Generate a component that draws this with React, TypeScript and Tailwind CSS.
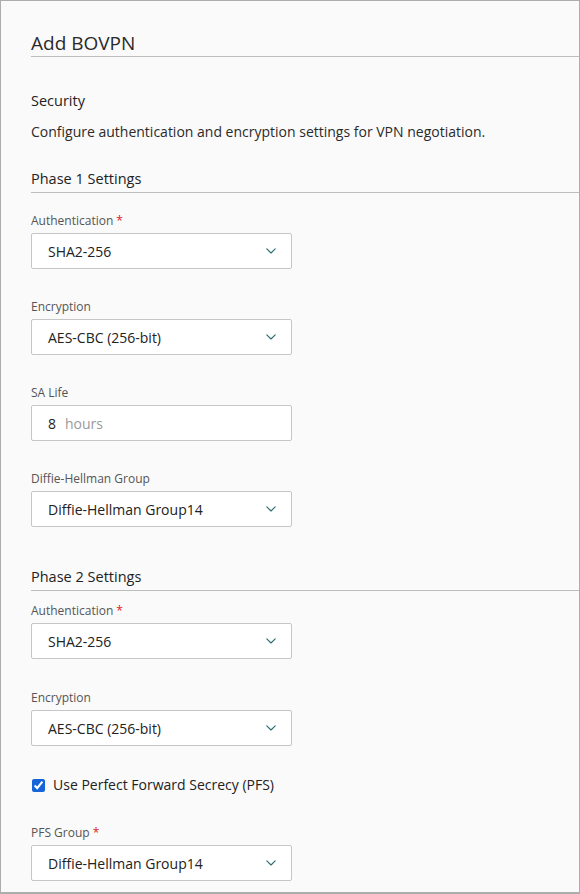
function Chevron() {
  return (
    <svg width="10" height="6" viewBox="0 0 10 6" fill="none" className="shrink-0 mr-[1px]">
      <path d="M0.8 0.8L5 5L9.2 0.8" stroke="#2a6f6f" strokeWidth="1.15" strokeLinecap="round" strokeLinejoin="round" />
    </svg>
  );
}

function Label({ text, required }: { text: string; required?: boolean }) {
  return (
    <div className="text-[12px] leading-[17px] text-[#555]">
      {text}
      {required && <span className="text-[#e0201b] ml-[3px]">*</span>}
    </div>
  );
}

function SelectBox({ value }: { value: string }) {
  return (
    <div className="mt-[4px] w-[261px] h-[36px] bg-white border border-[#c6c6c6] rounded-[2px] flex items-center justify-between pl-[16px] pr-[14px]">
      <span className="text-[14px] text-[#222]">{value}</span>
      <Chevron />
    </div>
  );
}

function Field({
  label,
  value,
  required,
  className = "",
}: {
  label: string;
  value: string;
  required?: boolean;
  className?: string;
}) {
  return (
    <div className={className}>
      <Label text={label} required={required} />
      <SelectBox value={value} />
    </div>
  );
}

function SectionHeading({ text, className = "" }: { text: string; className?: string }) {
  return (
    <div
      className={
        "text-[14.5px] leading-[20px] font-medium text-[#222] pb-[3px] border-b border-[#bdbdbd] " +
        className
      }
    >
      {text}
    </div>
  );
}

export default function App() {
  return (
    <div
      className="w-[580px] h-[894px] bg-[#fafafa] border border-[#adadad] border-b-[2px] pl-[30px] overflow-hidden"
      style={{ fontFamily: '"Open Sans", "Noto Sans", sans-serif' }}
    >
      {/* header */}
      <h1 className="mt-[29px] text-[19px] leading-[26px] text-[#2a2a2a] border-b border-[#bdbdbd]">
        Add BOVPN
      </h1>

      <div className="mt-[34px] text-[14.5px] leading-[20px] font-medium text-[#222]">Security</div>
      <p className="mt-[11px] text-[14px] leading-[20px] text-[#2a2a2a]">
        Configure authentication and encryption settings for VPN negotiation.
      </p>

      {/* phase 1 */}
      <SectionHeading text="Phase 1 Settings" className="mt-[27px]" />
      <Field className="mt-[19px]" label="Authentication" value="SHA2-256" required />
      <Field className="mt-[29px]" label="Encryption" value="AES-CBC (256-bit)" />

      <div className="mt-[29px]">
        <Label text="SA Life" />
        <div className="mt-[4px] w-[261px] h-[36px] bg-white border border-[#c6c6c6] rounded-[2px] flex items-center pl-[16px]">
          <span className="text-[14px] text-[#222]">8</span>
          <span className="ml-[9px] text-[14px] text-[#9a9a9a]">hours</span>
        </div>
      </div>

      <Field className="mt-[29px]" label="Diffie-Hellman Group" value="Diffie-Hellman Group14" />

      {/* phase 2 */}
      <SectionHeading text="Phase 2 Settings" className="mt-[40px]" />
      <Field className="mt-[11px]" label="Authentication" value="SHA2-256" required />
      <Field className="mt-[30px]" label="Encryption" value="AES-CBC (256-bit)" />

      <label className="mt-[29px] flex items-center gap-[8px] text-[14px] leading-[20px] text-[#222]">
        <input
          type="checkbox"
          defaultChecked
          className="w-[13px] h-[13px] m-0 ml-[1px] accent-[#1565d8]"
        />
        Use Perfect Forward Secrecy (PFS)
      </label>

      <Field className="mt-[29px]" label="PFS Group" value="Diffie-Hellman Group14" required />
    </div>
  );
}
